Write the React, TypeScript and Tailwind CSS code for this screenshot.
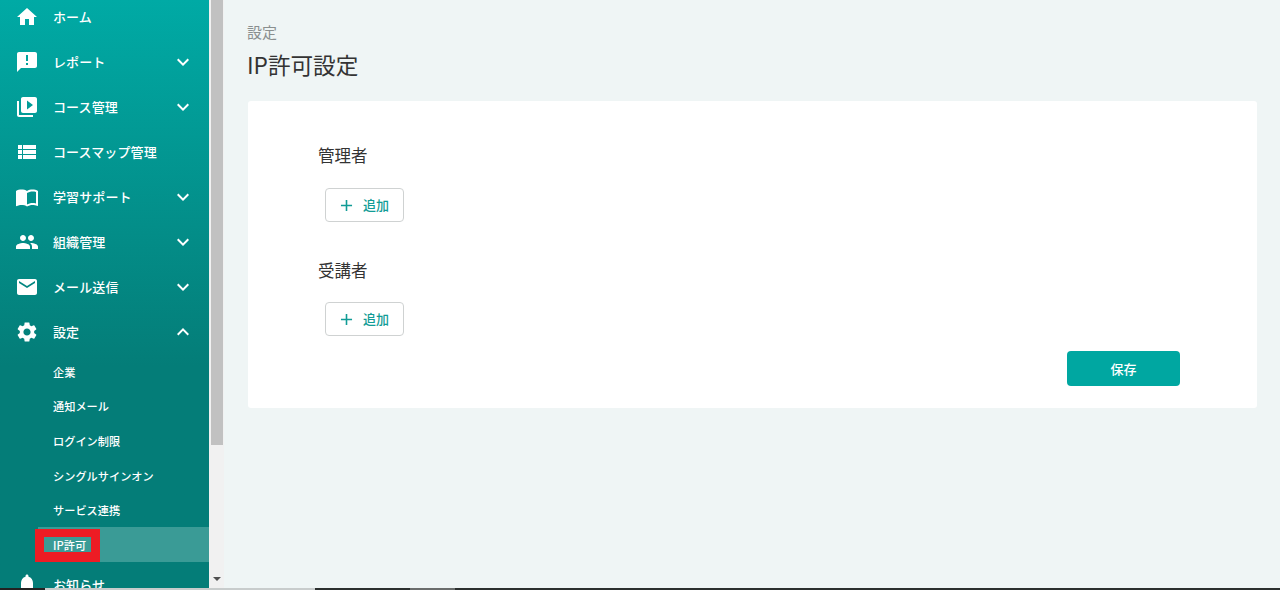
import { ReactNode } from "react";
import {
  MdAdd,
  MdAnnouncement,
  MdEmail,
  MdExpandLess,
  MdExpandMore,
  MdHome,
  MdImportContacts,
  MdNotifications,
  MdPeople,
  MdSettings,
  MdVideoLibrary,
  MdViewList,
} from "react-icons/md";

const fontStack = "font-['Noto_Sans_CJK_JP','Noto_Sans',sans-serif]";

const NavItem = ({
  icon,
  label,
  caret,
}: {
  icon: ReactNode;
  label: string;
  caret?: "up" | "down";
}) => (
  <div className="flex h-[45px] shrink-0 items-center pl-[15px] pr-[14px] text-white">
    <span className="flex w-[38px] shrink-0 text-[24px]">{icon}</span>
    <span className="flex-1 text-[13px] font-medium tracking-[0.1px]">{label}</span>
    {caret === "down" && <MdExpandMore className="text-[24px]" />}
    {caret === "up" && <MdExpandLess className="text-[24px]" />}
  </div>
);

const SubItem = ({ label }: { label: string }) => (
  <div className="flex h-[34.6px] shrink-0 items-center pl-[53px] pt-[2px] text-[11.2px] font-medium text-white">
    {label}
  </div>
);

const AddButton = () => (
  <button className="flex h-[34px] w-[79px] items-center gap-[7px] rounded-[4px] border border-[#cfd2d2] bg-white pl-[11px] text-[13px] font-medium text-[#119c96]">
    <MdAdd className="text-[19px]" />
    追加
  </button>
);

export default function App() {
  return (
    <div className={`relative flex h-[590px] w-[1280px] overflow-hidden bg-[#eff5f5] ${fontStack}`}>
      <nav className="relative flex h-[590px] w-[209px] shrink-0 flex-col overflow-hidden bg-gradient-to-b from-[#00aaa5] from-[0%] to-[#047d78] to-[62%]">
        <div className="-mt-[6px] flex flex-col">
          <NavItem icon={<MdHome />} label="ホーム" />
          <NavItem icon={<MdAnnouncement />} label="レポート" caret="down" />
          <NavItem icon={<MdVideoLibrary />} label="コース管理" caret="down" />
          <NavItem icon={<MdViewList />} label="コースマップ管理" />
          <NavItem icon={<MdImportContacts />} label="学習サポート" caret="down" />
          <NavItem icon={<MdPeople />} label="組織管理" caret="down" />
          <NavItem icon={<MdEmail />} label="メール送信" caret="down" />
          <NavItem icon={<MdSettings />} label="設定" caret="up" />
          <SubItem label="企業" />
          <SubItem label="通知メール" />
          <SubItem label="ログイン制限" />
          <SubItem label="シングルサインオン" />
          <SubItem label="サービス連携" />
          <div className="ml-[38px] flex h-[35px] shrink-0 items-center bg-[#3a9b96] pl-[15px] pt-[2px] text-[11.2px] font-medium text-white">
            IP許可
          </div>
          <NavItem icon={<MdNotifications />} label="お知らせ" />
        </div>
        <div className="absolute left-[35px] top-[529px] h-[33px] w-[65px] border-x-[9px] border-t-[8px] border-b-[10px] border-[#ed1c24]" />
      </nav>

      <div className="flex h-[590px] w-[15px] shrink-0 flex-col bg-[#f1f1f1]">
        <div className="ml-[2px] h-[445px] w-[12px] bg-[#c1c1c1]" />
        <div className="mt-auto mb-[9px] flex justify-center">
          <div className="h-0 w-0 border-x-[4px] border-t-[4px] border-x-transparent border-t-[#505050]" />
        </div>
      </div>

      <main className="flex-1 pl-[24px] pr-[23px] pt-[22px]">
        <p className="-ml-[1px] text-[15px] leading-[20px] text-[#8a8f8f]">設定</p>
        <h1 className="-ml-[1px] mt-[7px] text-[22.6px] leading-[32px] text-[#333]">IP許可設定</h1>
        <div className="mt-[20px] flex h-[307px] flex-col rounded-[3px] bg-white pl-[70px] pr-[77px] pt-[42px]">
          <h2 className="text-[16.5px] leading-[24px] text-[#333]">管理者</h2>
          <div className="ml-[7px] mt-[21px]">
            <AddButton />
          </div>
          <h2 className="mt-[36px] text-[16.5px] leading-[24px] text-[#333]">受講者</h2>
          <div className="ml-[7px] mt-[20px]">
            <AddButton />
          </div>
          <div className="mt-[15px] flex justify-end">
            <button className="h-[35px] w-[113px] rounded-[4px] bg-[#00a7a1] text-[13px] font-medium text-white">
              保存
            </button>
          </div>
        </div>
      </main>

      {/* dark strip along the bottom edge of the capture */}
      <div className="absolute left-0 top-[588px] flex h-[2px] w-[1280px]">
        <div className="w-[45px] bg-[#222]" />
        <div className="w-[270px] bg-[#c8cccc]" />
        <div className="w-[95px] bg-[#2b2f2e]" />
        <div className="w-[45px] bg-[#6a6d6c]" />
        <div className="flex-1 bg-[#2b2f2e]" />
      </div>
    </div>
  );
}
